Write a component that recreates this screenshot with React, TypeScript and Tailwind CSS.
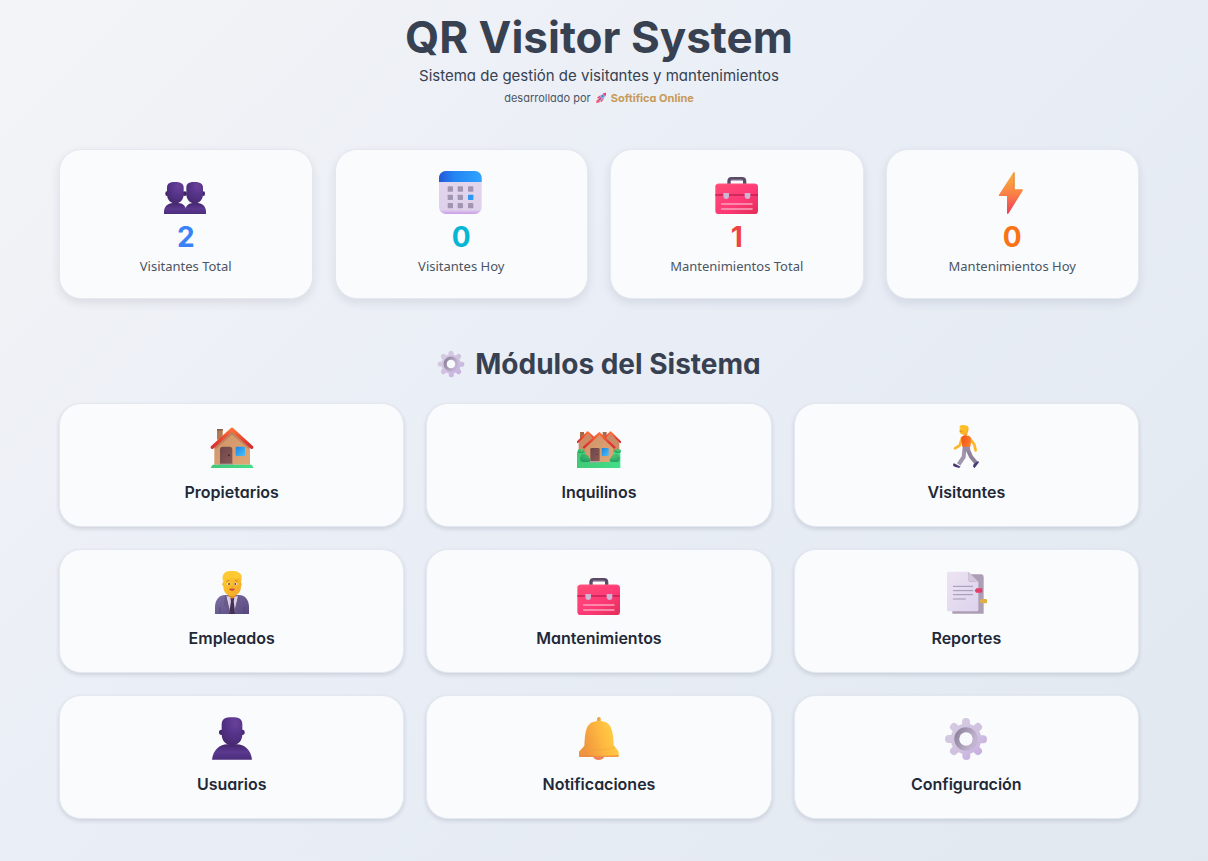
import type { ReactNode } from "react";

function Defs() {
  return (
    <svg width="0" height="0" className="absolute" aria-hidden="true">
      <defs>
        <radialGradient id="skin" cx="0.65" cy="0.2" r="0.8">
          <stop offset="0" stopColor="#6a4199" />
          <stop offset="0.5" stopColor="#56348b" />
          <stop offset="1" stopColor="#472a70" />
        </radialGradient>
        <linearGradient id="torso" x1="0" y1="0" x2="0" y2="1">
          <stop offset="0" stopColor="#44266c" />
          <stop offset="0.5" stopColor="#5b398f" />
          <stop offset="1" stopColor="#4c2d7c" />
        </linearGradient>
        <linearGradient id="calTop" x1="0" y1="0" x2="1" y2="0">
          <stop offset="0" stopColor="#2657d6" />
          <stop offset="0.35" stopColor="#2384f2" />
          <stop offset="1" stopColor="#2fa4ff" />
        </linearGradient>
        <linearGradient id="calBody" x1="0" y1="0" x2="0" y2="1">
          <stop offset="0" stopColor="#e2d6ec" />
          <stop offset="0.9" stopColor="#dfd1eb" />
          <stop offset="1" stopColor="#c99be9" />
        </linearGradient>
        <linearGradient id="caseRed" x1="0" y1="0" x2="1" y2="1">
          <stop offset="0" stopColor="#ff4c76" />
          <stop offset="0.55" stopColor="#ff3a78" />
          <stop offset="1" stopColor="#e32d58" />
        </linearGradient>
        <linearGradient id="bolt" x1="0" y1="0" x2="0" y2="1">
          <stop offset="0" stopColor="#f8b43e" />
          <stop offset="0.5" stopColor="#f98345" />
          <stop offset="1" stopColor="#ee3e59" />
        </linearGradient>
        <linearGradient id="wall" x1="0" y1="0" x2="1" y2="1">
          <stop offset="0" stopColor="#ce9268" />
          <stop offset="1" stopColor="#dfa675" />
        </linearGradient>
        <linearGradient id="roof" x1="0" y1="0" x2="0" y2="1">
          <stop offset="0" stopColor="#ff713c" />
          <stop offset="0.6" stopColor="#e8402f" />
          <stop offset="1" stopColor="#d52f32" />
        </linearGradient>
        <linearGradient id="door" x1="0" y1="0" x2="1" y2="1">
          <stop offset="0" stopColor="#6d4548" />
          <stop offset="1" stopColor="#8c5b57" />
        </linearGradient>
        <linearGradient id="glass" x1="0" y1="0" x2="1" y2="1">
          <stop offset="0" stopColor="#1a82df" />
          <stop offset="1" stopColor="#4ac1fb" />
        </linearGradient>
        <linearGradient id="grass" x1="0" y1="0" x2="1" y2="0">
          <stop offset="0" stopColor="#43c976" />
          <stop offset="1" stopColor="#42de89" />
        </linearGradient>
        <radialGradient id="bush" cx="0.6" cy="0.2" r="0.9">
          <stop offset="0" stopColor="#55cf73" />
          <stop offset="1" stopColor="#1c9c62" />
        </radialGradient>
        <linearGradient id="face" x1="0" y1="0" x2="1" y2="1">
          <stop offset="0" stopColor="#ffce2b" />
          <stop offset="1" stopColor="#f5a52b" />
        </linearGradient>
        <linearGradient id="shirt" x1="0" y1="0" x2="1" y2="0.4">
          <stop offset="0" stopColor="#ee4c25" />
          <stop offset="1" stopColor="#ff7b22" />
        </linearGradient>
        <linearGradient id="suit" x1="0" y1="0" x2="1" y2="1">
          <stop offset="0" stopColor="#7c71a5" />
          <stop offset="1" stopColor="#58487f" />
        </linearGradient>
        <linearGradient id="paper" x1="0" y1="0" x2="1" y2="1">
          <stop offset="0" stopColor="#ece4f3" />
          <stop offset="1" stopColor="#ddd2ec" />
        </linearGradient>
        <linearGradient id="bell" x1="0" y1="0.3" x2="1" y2="0">
          <stop offset="0" stopColor="#ee963f" />
          <stop offset="0.5" stopColor="#ffba40" />
          <stop offset="1" stopColor="#ffdb49" />
        </linearGradient>
        <linearGradient id="gear" gradientUnits="userSpaceOnUse" x1="60" y1="50" x2="155" y2="155">
          <stop offset="0" stopColor="#d7cbe2" />
          <stop offset="0.6" stopColor="#cfc1df" />
          <stop offset="1" stopColor="#c7abe2" />
        </linearGradient>
        <linearGradient id="gearHub" x1="0" y1="0" x2="1" y2="0.5">
          <stop offset="0" stopColor="#8f829b" />
          <stop offset="1" stopColor="#c1b4d0" />
        </linearGradient>
      </defs>
    </svg>
  );
}

function Art({ box, size = "size-11", children }: { box: string; size?: string; children: ReactNode }) {
  return (
    <svg viewBox={box} className={`${size} shrink-0`} aria-hidden="true">
      {children}
    </svg>
  );
}

function People() {
  return (
    <Art box="42 15 132 132">
      <path d="M42 148v-8c0-15 12-26 26-26h16c14 0 25 9 25 26v8z" fill="url(#torso)" />
      <path d="M105 148v-8c0-17 11-26 24-26h14c14 0 25 11 25 26v8z" fill="url(#torso)" />
      <ellipse cx="50" cy="86" rx="4" ry="7" fill="#422466" />
      <ellipse cx="104" cy="86" rx="7" ry="7" fill="#422466" />
      <ellipse cx="161" cy="86" rx="4" ry="7" fill="#422466" />
      <path d="M51 68c0-13 8-17 24-17s26 4 26 17v20c0 16-11 28-25 28S51 104 51 88z" fill="url(#skin)" />
      <path d="M109 68c0-13 8-17 24-17s26 4 26 17v20c0 16-12 28-25 28s-25-12-25-28z" fill="url(#skin)" />
    </Art>
  );
}

function Calendar() {
  return (
    <Art box="43 15 132 132">
      <rect x="43" y="18" width="128" height="129" rx="21" fill="url(#calBody)" />
      <path d="M43 51V39c0-12 9-21 21-21h86c12 0 21 9 21 21v12z" fill="url(#calTop)" />
      {[64, 89, 114].map((y) =>
        [69, 99, 130].map((x) => (
          <rect key={`${x}-${y}`} x={x} y={y} width="16" height="16" rx="2" fill={x === 130 && y === 89 ? "#2b96f3" : "#a196b2"} />
        )),
      )}
    </Art>
  );
}

function Toolbox() {
  return (
    <Art box="44 15 132 132">
      <path d="M86 60V49c0-5 3-8 8-8h31c5 0 8 3 8 8v11" fill="none" stroke="#594a68" strokeWidth="10" />
      <path d="M92 44h34" stroke="#786a85" strokeWidth="4" />
      <rect x="45" y="56" width="128" height="91" rx="10" fill="url(#caseRed)" />
      <path d="M45 90h128" stroke="#c42155" strokeWidth="4" />
      <path d="M46 65c1-6 5-8 9-8h108c6 0 9 4 9 8" fill="none" stroke="#ff6487" strokeWidth="2" />
      <path d="M69 84h17v9c0 6-3 9-8 9s-9-3-9-9zM133 84h17v9c0 6-3 9-8 9s-9-3-9-9z" fill="#cdb5d4" />
      <path d="M64 117h91M64 132h91" stroke="#fba2bd" strokeWidth="5" strokeLinecap="round" />
    </Art>
  );
}

function Bolt() {
  return (
    <Art box="30 15 132 132">
      <path d="M101 21c2-1 3 0 3 2v50h22c3 0 4 2 2 4l-42 68c-2 3-5 2-5-1V93H59c-3 0-3-2-2-4z" fill="url(#bolt)" />
      <path d="M102 24v50" stroke="#dc874b" strokeWidth="3" />
    </Art>
  );
}

function House() {
  return (
    <Art box="30 15 132 132">
      <path d="M51 27h17v32H51z" fill="#b47a52" />
      <path d="M51 27h17v5H51z" fill="#8d5d42" />
      <path d="M43 77l53-48 54 48v57H43z" fill="url(#wall)" />
      <path d="M45 84l51-46 52 46" fill="none" stroke="#b06a48" strokeWidth="8" opacity="0.5" />
      <path d="M37 82l59-54 59 54" fill="none" stroke="url(#roof)" strokeWidth="10" strokeLinecap="round" strokeLinejoin="round" />
      <path d="M60 134V88c0-5 3-8 8-8h21c5 0 8 3 8 8v46z" fill="url(#door)" />
      <circle cx="87" cy="106" r="3" fill="#3e2c31" />
      <rect x="107" y="80" width="28" height="28" rx="3" fill="url(#glass)" />
      <path d="M57 131h42v5H57z" fill="#aaa4ae" />
      <path d="M38 134h117l6 10H32z" fill="url(#grass)" />
    </Art>
  );
}

function Houses() {
  return (
    <Art box="36 15 132 132">
      <path d="M45 36h12v25H45zM113 36h12v25h-12z" fill="#a56b49" />
      <path d="M41 65l27-25 27 25v40H41zM110 65l27-25 26 25v40h-53z" fill="#cd8b64" />
      <path d="M38 66l30-29 33 30M106 66l31-29 29 29" fill="none" stroke="url(#roof)" strokeWidth="6" strokeLinecap="round" strokeLinejoin="round" />
      <path d="M36 95h130v49H36z" fill="url(#grass)" />
      <path d="M61 77l42-36 41 36v49H61z" fill="url(#wall)" />
      <path d="M57 82l46-42 45 42" fill="none" stroke="url(#roof)" strokeWidth="7" strokeLinecap="round" strokeLinejoin="round" />
      <rect x="76" y="84" width="28" height="40" rx="4" fill="url(#door)" />
      <circle cx="96" cy="103" r="2" fill="#422e33" />
      <rect x="110" y="84" width="21" height="24" rx="2" fill="url(#glass)" />
      <path d="M75 123h31v4H75z" fill="#bc9a9f" />
      <ellipse cx="48" cy="93" rx="10" ry="6" fill="url(#bush)" />
      <ellipse cx="158" cy="93" rx="10" ry="6" fill="url(#bush)" />
      <path d="M45 116c-1-13 12-18 19-11 8 1 8 8 7 8 8 4 7 13-2 13H54c-5 0-9-5-9-10zM165 116c1-13-12-18-19-11-8 1-8 8-7 8-8 4-7 13 2 13h15c5 0 9-5 9-10z" fill="url(#bush)" />
    </Art>
  );
}

function Walker() {
  return (
    <Art box="42 15 132 132">
      <path d="M96 54L89 76 75 85M116 51l17 23 4 17" fill="none" stroke="#ffb52a" strokeWidth="8" strokeLinecap="round" strokeLinejoin="round" />
      <path d="M110 82l13 28 15 18" fill="none" stroke="#8c8198" strokeWidth="12" strokeLinejoin="round" />
      <path d="M104 80l-3 31-15 22" fill="none" stroke="#a196ad" strokeWidth="12" strokeLinejoin="round" />
      <path d="M98 76h21l2 16-20 4z" fill="#978ca3" />
      <path d="M72 130l20 10-5 4c-5-2-12-2-16-5-3-2-2-8 1-9zM144 123l3 4-13 17-5-4 2-8z" fill="#493979" />
      <path d="M101 38h11v15h-11z" fill="#eda029" />
      <path d="M94 54c0-5 7-8 13-7l10 2c7 2 7 14 4 31H97c0-6-4-17-3-26z" fill="url(#shirt)" />
      <path d="M89 19l7-4 15 2c10 5 3 28-7 27-10 0-15-3-15-8z" fill="url(#face)" />
      <path d="M89 20c2-5 8-5 11-4 10-2 15 6 10 14l-4 9-4-14z" fill="#ffbe25" />
      <path d="M89 33l8 1" stroke="#bd6426" strokeWidth="2" />
    </Art>
  );
}

function Employee() {
  return (
    <Art box="30 18 132 132">
      <path d="M45 147v-21c0-22 14-36 30-36h42c17 0 30 14 30 36v21z" fill="url(#suit)" />
      <path d="M79 94h35l-10 53H90z" fill="#dbcde6" />
      <path d="M91 98h12l-2 11 5 38H87l6-38z" fill="#433153" />
      <path d="M78 91l14 55-20-27 3-25zM115 91l-14 55 20-27-3-25z" fill="#675886" />
      <path d="M60 126v21M132 126v21" stroke="#514372" strokeWidth="2" />
      <path d="M85 80h23v14l-12 7-11-7z" fill="#dd8f28" />
      <rect x="67" y="50" width="58" height="15" rx="7" fill="#f7a728" />
      <path d="M70 41c5-18 48-19 53-1v24c0 19-12 29-27 29S70 83 70 64z" fill="url(#face)" />
      <path d="M70 50c-6-14 0-24 6-28 8-6 33-6 41 1 8 4 11 14 6 27l-3-11c-10 3-20 0-26-3-6 5-15 5-21 4z" fill="#ffc933" />
      <path d="M79 49l9-3M105 46l8 3" stroke="#cc812b" strokeWidth="3" />
      <ellipse cx="86" cy="57" rx="5" ry="4" fill="#fff4df" />
      <ellipse cx="107" cy="57" rx="5" ry="4" fill="#fff4df" />
      <circle cx="87" cy="57" r="3" fill="#5a3f35" />
      <circle cx="106" cy="57" r="3" fill="#5a3f35" />
      <path d="M95 65h5" stroke="#e29123" strokeWidth="2" />
      <path d="M87 72c5-2 13-2 18 0-2 7-15 7-18 0z" fill="#c94b3f" />
    </Art>
  );
}

function Report() {
  return (
    <Art box="42 453 132 132">
      <path d="M67 463h86c5 0 8 3 8 8v110H67z" fill="#ac9fb5" />
      <path d="M51 460c0-3 2-5 5-5h59l30 30v84c0 3-2 5-5 5H56c-3 0-5-2-5-5z" fill="url(#paper)" />
      <path d="M115 455v25c0 4 2 5 5 5h25z" fill="#b6a9bf" />
      <path d="M115 456l29 29-23-1c-4 0-6-2-6-5z" fill="#d4c7de" />
      <path d="M70 499h58M70 512h58M70 524h58M70 537h36" stroke="#a196b2" strokeWidth="3" strokeLinecap="round" />
      <path d="M139 505h15c2 0 3 1 3 3v7c0 2-1 3-3 3h-15l-5-6z" fill="#df416d" />
      <path d="M154 537h14c2 0 3 1 3 3v7c0 2-1 3-3 3h-14l-6-6z" fill="#e0ae42" />
    </Art>
  );
}

function User() {
  return (
    <Art box="30 456 132 132">
      <path d="M36 584c3-29 24-46 46-46h28c23 0 43 17 46 46z" fill="url(#torso)" />
      <ellipse cx="64" cy="502" rx="7" ry="8" fill="#462870" />
      <ellipse cx="127" cy="502" rx="7" ry="8" fill="#462870" />
      <path d="M65 479c0-17 10-22 31-22s31 5 31 22v28c0 21-13 34-31 34s-31-13-31-34z" fill="url(#skin)" />
    </Art>
  );
}

function Bell() {
  return (
    <Art box="36 36 132 132">
      <ellipse cx="101" cy="155" rx="16" ry="10" fill="#ee805c" />
      <rect x="96" y="36" width="11" height="20" rx="5" fill="#f3a63e" />
      <path d="M58 122c1-22 2-41 8-54 6-14 18-20 36-20s30 6 36 20c6 13 7 32 8 52l15 20v13c0 2-3 3-6 3H47c-3 0-5-1-5-4v-12z" fill="url(#bell)" />
      <path d="M56 128c24 9 68 10 92-1" fill="none" stroke="#f2a03a" strokeWidth="3" opacity="0.5" />
      <path d="M42 149c36 4 82 5 119 0v4c0 2-3 3-6 3H47c-3 0-5-1-5-4z" fill="#e98546" opacity="0.6" />
    </Art>
  );
}

function Gear({ size }: { size?: string }) {
  return (
    <Art box="42 36 132 132" size={size}>
      <g fill="none" stroke="url(#gear)" strokeWidth="24" strokeLinecap="round">
        <path d="M108 51l1 102M57 102l102 1M72 66l72 72M144 66l-72 72" />
      </g>
      <circle cx="108" cy="102" r="46" fill="url(#gear)" />
      <circle cx="108" cy="102" r="27" fill="none" stroke="url(#gearHub)" strokeWidth="16" />
      <circle cx="108" cy="102" r="20" fill="#f8f9fc" />
    </Art>
  );
}

function Rocket() {
  return (
    <Art box="0 0 32 32" size="size-3">
      <path d="M5 16l8-7 5 1-6 8zM16 27l7-8-1-5-8 7z" fill="#ee316a" />
      <path d="M3 29c0-6 2-9 6-9l4 4c0 4-4 5-10 5z" fill="#f65775" />
      <path d="M9 20C13 9 20 3 29 2c1 9-5 17-16 22z" fill="#a9b5d5" />
      <path d="M21 4l8-2c1 3 0 6-2 9z" fill="#f13569" />
      <circle cx="20" cy="11" r="3" fill="#3d83d6" />
      <path d="M10 22l7-7" stroke="#d92c62" strokeWidth="3" />
    </Art>
  );
}

const stats = [
  { label: "Visitantes Total", value: 2, color: "text-[#3b82f6]", icon: <People /> },
  { label: "Visitantes Hoy", value: 0, color: "text-[#06b6d4]", icon: <Calendar /> },
  { label: "Mantenimientos Total", value: 1, color: "text-[#ef4444]", icon: <Toolbox /> },
  { label: "Mantenimientos Hoy", value: 0, color: "text-[#f97316]", icon: <Bolt /> },
];

const modules = [
  { name: "Propietarios", icon: <House /> },
  { name: "Inquilinos", icon: <Houses /> },
  { name: "Visitantes", icon: <Walker /> },
  { name: "Empleados", icon: <Employee /> },
  { name: "Mantenimientos", icon: <Toolbox /> },
  { name: "Reportes", icon: <Report /> },
  { name: "Usuarios", icon: <User /> },
  { name: "Notificaciones", icon: <Bell /> },
  { name: "Configuración", icon: <Gear /> },
];

export default function App() {
  return (
    <div className="min-h-screen bg-[linear-gradient(135deg,#f3f4f6_0%,#e8edf6_50%,#e2e8f0_100%)] pt-[10px] pr-[69px] pb-10 pl-[59px] font-['Inter',sans-serif] text-[#374151] [font-feature-settings:'cv11']">
      <Defs />
      <header className="flex flex-col items-center text-center">
        <h1 className="text-[44px] leading-[54px] font-bold">QR Visitor System</h1>
        <p className="text-[15px] leading-6">Sistema de gestión de visitantes y mantenimientos</p>
        <p className="flex items-center gap-1 text-[11px] leading-5 text-[#4b5563]">
          desarrollado por
          <Rocket />
          <a href="#softifica" className="font-bold text-[#c79a56]">
            Softifica Online
          </a>
        </p>
      </header>

      <main>
        <section aria-label="Resumen" className="mt-[41px] grid grid-cols-4 gap-[22px]">
          {stats.map((s) => (
            <div
              key={s.label}
              className="flex flex-col items-center rounded-[22px] border border-[#e5e8f0] bg-[#fafbfd] pt-5 pb-[22px] shadow-[0_4px_10px_rgba(30,41,59,0.10)]"
            >
              {s.icon}
              <p className={`mt-[5px] text-[28px] leading-9 font-bold ${s.color}`}>{s.value}</p>
              <p className="mt-px font-['Noto_Sans',sans-serif] text-[13px] leading-5 text-[#4b5563]">{s.label}</p>
            </div>
          ))}
        </section>

        <h2 className="mt-[45px] flex items-center justify-center gap-[10px] text-[28px] leading-10 font-bold">
          <Gear size="size-7" />
          Módulos del Sistema
        </h2>

        <nav aria-label="Módulos" className="mt-[19px] grid grid-cols-3 gap-[22px]">
          {modules.map((m) => (
            <a
              key={m.name}
              href="#modulo"
              className="flex flex-col items-center gap-[11px] rounded-[22px] border border-[#e5e8f0] bg-[#fafbfd] pt-[21px] pb-[22px] text-base leading-6 font-semibold text-[#1f2937] shadow-[0_2px_4px_rgba(30,41,59,0.14)]"
            >
              {m.icon}
              {m.name}
            </a>
          ))}
        </nav>
      </main>
    </div>
  );
}
